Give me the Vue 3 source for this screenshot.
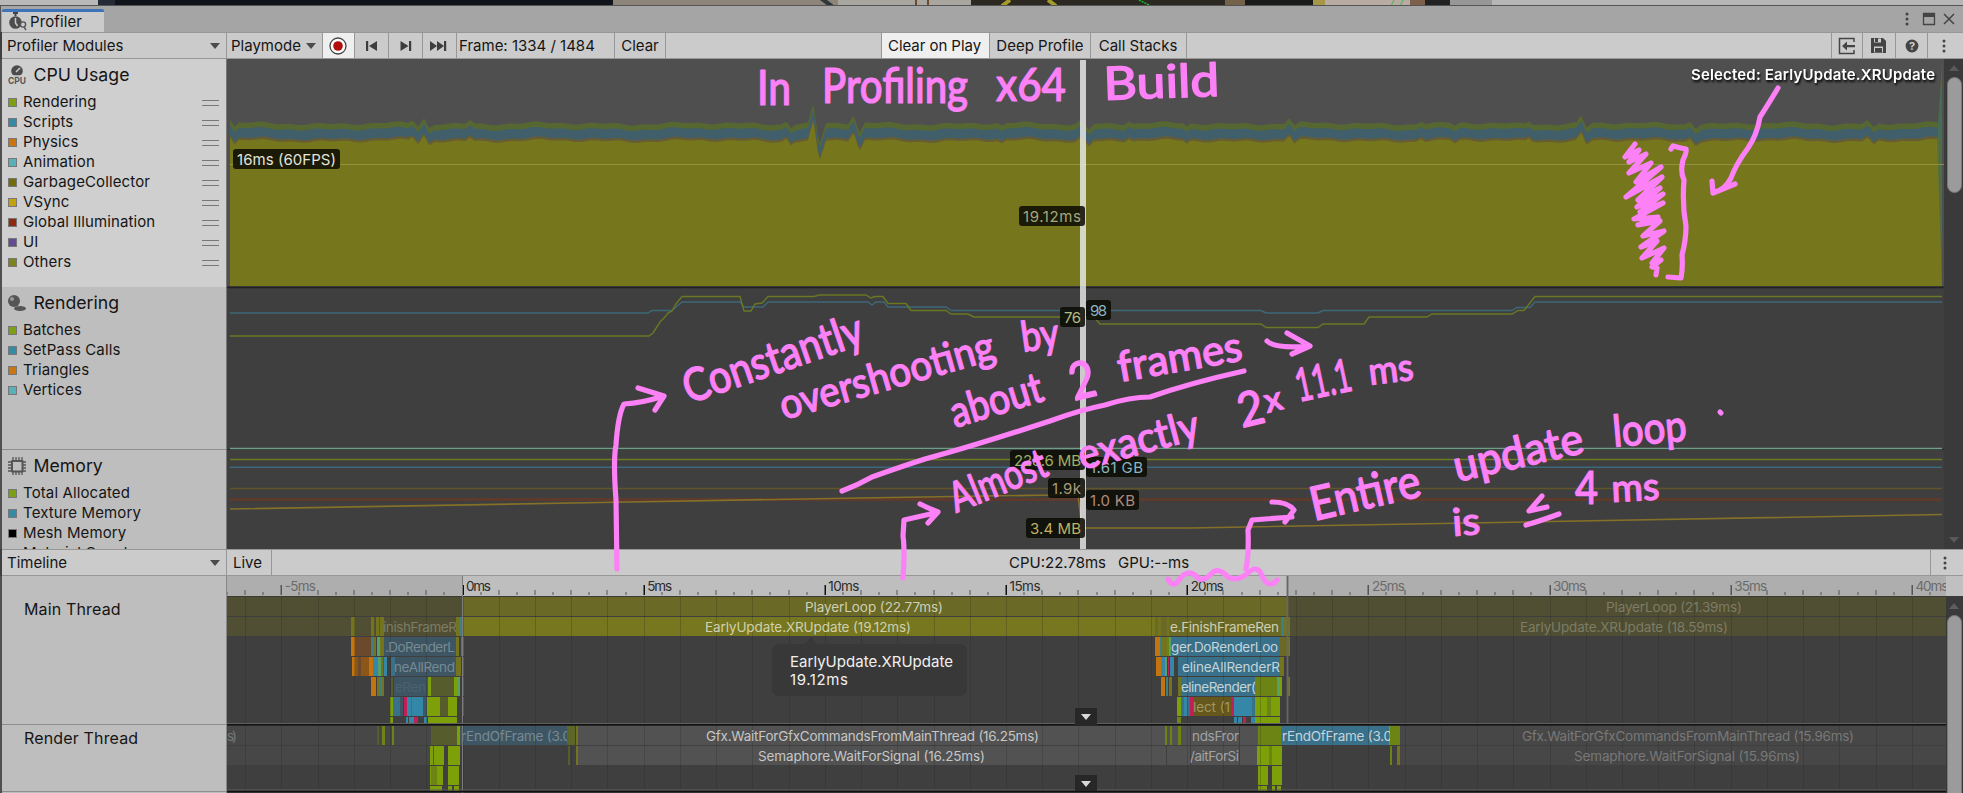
<script setup>
const modules = [
  { name: 'CPU Usage', key: 'cpu', handles: true, items: [
    ['Rendering', '#7f9f12'], ['Scripts', '#378aa5'], ['Physics', '#cb7412'], ['Animation', '#5bb0b8'],
    ['GarbageCollector', '#716c0e'], ['VSync', '#c3a10c'], ['Global Illumination', '#8c2a12'], ['UI', '#654c91'], ['Others', '#7c8220'] ] },
  { name: 'Rendering', key: 'rendering', items: [
    ['Batches', '#7f9f12'], ['SetPass Calls', '#378aa5'], ['Triangles', '#cb7412'], ['Vertices', '#5bb0b8'] ] },
  { name: 'Memory', key: 'memory', items: [
    ['Total Allocated', '#7f9f12'], ['Texture Memory', '#378aa5'], ['Mesh Memory', '#000'], ['Material Count', '#5bb0b8'] ] },
]

/* CPU area chart */
const spikes = [[230, -3, 4], [235, 4, 4], [412, -3, 4], [418, 3, 3], [424, -5, 4], [430, 4, 5], [470, -4, 5], [786, -3, 5], [791, 3, 4],
  [813, -18, 5], [820, 19, 6], [853, -8, 5], [860, 9, 5], [1002, 3, 5], [1080, -3, 5], [1089, 6, 5], [1129, -3, 4], [1187, 3, 4],
  [1289, -5, 5], [1295, 3, 5], [1421, -3, 5], [1455, 3, 5], [1529, -3, 4], [1581, -7, 5], [1587, 4, 5], [1690, -3, 5], [1696, 3, 5], [1867, -3, 5], [1874, 4, 5]]
const wobble = (x, k) => Math.sin(x * 0.09 + k) * 0.9 + Math.sin(x * 0.23 + k * 2) * 0.6 + Math.sin(x * 0.041 + 1) * 0.7
const shift = (x) => spikes.reduce((s, [c, a, w]) => s + a * Math.max(0, 1 - Math.abs(x - c) / w), 0)
const edge = (base, k) => {
  const pts = []
  for (let x = 230; x <= 1938; x += 1) pts.push(`${x},${(base + wobble(x, k) + shift(x)).toFixed(1)}`)
  return pts.join(' ')
}
const area = (base, k, end) => `230,286 ${edge(base, k)} ${end} 1942,286`
const greenArea = area(123.5, 0.5, '1942,60')
const blueArea = area(129, 0.5, '1942,70')
const brownArea = area(138.5, 0.2, '1942,139')
const oliveArea = area(141, 0.2, '1942,286')

const chartLines = [
  ['230,313 648,313 652,310.5 672,310.5 682,302 740,302 744,307 763,307 768,302 868,302 872,305 876,302 884,302 888,307 946,307 951,310.5 1261,310.5 1266,313 1318,313 1323,310.5 1512,310.5 1517,307.5 1530,307.5 1535,302 1942,302', '#3d6878', 1.4],
  ['230,336 649,336 653,333 660,322 664,318 668,313 672,311 676,304 682,296.5 740,296.5 744,311 751,311 755,304 762,303 768,296.5 814,296.5 819,295 866,295 871,298 875,296.5 883,296.5 888,303.5 906,303.5 911,310.5 946,310.5 951,314 968,314 974,317 1094,317 1100,324 1261,324 1266,327.5 1318,327.5 1323,324 1364,324 1369,317 1427,317 1432,314 1512,314 1518,310.5 1524,310.5 1535,296.5 1942,296.5', '#687823', 1.4],
  ['230,448.5 1942,448.5', '#719d88', 1.6], ['230,459.5 1942,459.5', '#6b7c22', 1.6], ['230,467.2 1942,467.2', '#3b687c', 1.6],
  ['230,488.5 1942,488.5', '#615429', 1.4], ['230,499.5 1942,499.5', '#5d3a2b', 3],
  ['230,509 600,502.5 860,498 1055,495 1078,495 1082,528 1190,528 1550,521.5 1942,514.5', '#857028', 1.6],
]
const tags = [
  ['16ms (60FPS)', 233, 149, 107, '#e4e4dc'], ['19.12ms', 1019, 206, 66, '#a6a67c'], ['76', 1060, 307, 25, '#b4bd80'], ['98', 1086, 300, 25, '#8cb5c2'],
  ['228.6 MB', 1010, 450, 75, '#9fae63'], ['1.61 GB', 1086, 457, 61, '#8cb5c2'], ['1.9k', 1048, 478, 37, '#a79b78'],
  ['1.0 KB', 1086, 490, 53, '#b08a7c'], ['3.4 MB', 1026, 518, 59, '#bdb262'],
]

/* Timeline */
const msX = (ms) => 462.5 + ms * 36.235
const ticks = []
for (let i = -13; i <= 81; i++) {
  const ms = i / 2
  const kind = i % 10 === 0 ? 10 : i % 2 === 0 ? 5 : 3
  ticks.push({ x: Math.round(msX(ms)), h: kind, dim: ms < 0 || ms > 22.77 })
}
const grid = ticks.filter((t) => t.h >= 5)
const labels = [[-5, 31], [0, 25], [5, 25], [10, 31], [15, 31], [20, 33], [25, 33], [30, 33], [35, 33], [40, 33]]
  .map(([m, w]) => ({ t: m + 'ms', x: msX(m) + 3.5, w, dim: m < 0 || m > 22 }))

const rows = [597, 617, 637, 657, 677, 697, 717, 726, 746, 766, 786]
const heights = [19, 19, 19, 19, 19, 19, 6, 19, 19, 19, 5]
const C = { o: '#c4740f', b: '#6a4a2a', t: '#3d7f86', y: '#74741f', g: '#7d9f08', d: '#565c2b', m: '#c02057', B: '#3587a8', D: '#3e5663', S: '#39718a',
  G: '#6c8414', p: '#6b6926', q: '#504f33', x: '#77771f', w: '#525252', v: '#474747', n: '#66581c', e: '#57a06a', r: '#8c5618' }
const bars = [
  [0, 227, 462, 'q'], [0, 462, 1287, 'p'], [0, 1288, 1946, 'q'],
  [1, 227, 462, 'q'], [1, 351, 355, 'y'], [1, 371, 374, 'y'], [1, 376, 384, 'y'], [1, 379, 380, 'd'], [1, 456, 459, 'y'], [1, 459, 462, 't'],
  [1, 462, 1155, 'x'], [1, 1155, 1281, 'p'], [1, 1158, 1161, 'y'], [1, 1167, 1169, 'y'], [1, 1281, 1284, 't'], [1, 1284, 1290, 'y'], [1, 1290, 1946, 'q'],
  [2, 351, 355, 'o'], [2, 355, 371, 'b'], [2, 371, 374, 't'], [2, 374, 376, 'y'], [2, 377, 380, 'e'], [2, 380, 384, 'y'], [2, 384, 456, 'D'], [2, 456, 459, 'y'], [2, 461, 464, 'y'],
  [2, 1155, 1160, 'o'], [2, 1160, 1162, 't'], [2, 1162, 1167, 'y'], [2, 1167, 1169, 'G'], [2, 1169, 1171, 'e'], [2, 1171, 1280, 'S'], [2, 1280, 1287, 'p'], [2, 1287, 1290, 'y'],
  [3, 352, 355, 'o'], [3, 355, 370, 'r'], [3, 358, 361, 'b'], [3, 369, 373, 'o'], [3, 373, 378, 'B'], [3, 378, 381, 'e'], [3, 381, 383, 'y'], [3, 383, 384, 'm'], [3, 384, 387, 'B'], [3, 391, 395, 'S'], [3, 395, 456, 'D'], [3, 456, 461, 'y'], [3, 462, 464, 'y'],
  [3, 1156, 1161, 'o'], [3, 1161, 1165, 'B'], [3, 1165, 1167, 'e'], [3, 1168, 1169, 'm'], [3, 1170, 1174, 'B'], [3, 1178, 1280, 'S'], [3, 1280, 1284, 'y'],
  [4, 371, 376, 'o'], [4, 377, 379, 'y'], [4, 379, 382, 't'], [4, 382, 384, 'y'], [4, 391, 393, 'd'], [4, 394, 428, 'D'], [4, 428, 431, 'g'], [4, 431, 454, 'd'], [4, 454, 457, 'g'], [4, 457, 460, 'e'], [4, 462, 464, 'y'],
  [4, 1161, 1165, 'o'], [4, 1166, 1168, 't'], [4, 1169, 1172, 'y'], [4, 1178, 1181, 'y'], [4, 1181, 1255, 'S'], [4, 1255, 1277, 'G'], [4, 1277, 1279, 'e'], [4, 1279, 1282, 'g'], [4, 1288, 1290, 'y'],
  [5, 390, 393, 'g'], [5, 393, 400, 'S'], [5, 400, 403, 'D'], [5, 404, 407, 'm'], [5, 407, 423, 'B'], [5, 411, 412, 'S'], [5, 423, 427, 'D'], [5, 427, 440, 'g'], [5, 440, 448, 'd'], [5, 448, 457, 'g'], [5, 462, 464, 'y'],
  [5, 1177, 1181, 'g'], [5, 1181, 1190, 'S'], [5, 1184, 1187, 'B'], [5, 1190, 1193, 'm'], [5, 1193, 1232, 'n'], [5, 1232, 1234, 'm'], [5, 1234, 1252, 'B'], [5, 1252, 1255, 'S'], [5, 1255, 1280, 'g'], [5, 1267, 1271, 'G'],
  [6, 390, 393, 'g'], [6, 406, 408, 'B'], [6, 409, 414, 'B'], [6, 414, 418, 'm'], [6, 424, 427, 'B'], [6, 428, 457, 'g'],
  [6, 1177, 1181, 'G'], [6, 1234, 1237, 'B'], [6, 1238, 1242, 'B'], [6, 1243, 1246, 'm'], [6, 1251, 1255, 'B'], [6, 1255, 1280, 'g'],
  [7, 227, 431, 'v'], [7, 377, 379, 'd'], [7, 382, 385, 'G'], [7, 392, 394, 'G'], [7, 431, 457, 'd'], [7, 457, 460, 'g'], [7, 460, 567, 'D'], [7, 567, 575, 'd'], [7, 571, 572, 'y'], [7, 576, 578, 'y'], [7, 578, 1190, 'w'],
  [7, 1191, 1239, 'w'], [7, 1240, 1258, 'w'], [7, 1165, 1167, 'G'], [7, 1170, 1172, 'G'], [7, 1178, 1181, 'G'], [7, 1258, 1281, 'G'], [7, 1281, 1389, 'S'], [7, 1389, 1391, 'e'], [7, 1390, 1400, 'G'], [7, 1400, 1946, 'v'],
  [8, 227, 430, 'v'], [8, 430, 444, 'g'], [8, 433, 434, 'd'], [8, 448, 460, 'g'], [8, 568, 570, 'd'], [8, 576, 578, 'y'], [8, 578, 1166, 'w'], [8, 1167, 1190, 'w'], [8, 1191, 1239, 'w'], [8, 1240, 1257, 'w'],
  [8, 1257, 1282, 'g'], [8, 1269, 1272, 'G'], [8, 1390, 1392, 'G'], [8, 1397, 1400, 'y'], [8, 1400, 1946, 'v'],
  [9, 430, 443, 'g'], [9, 431, 437, 'G'], [9, 448, 459, 'g'], [9, 1258, 1268, 'g'], [9, 1272, 1282, 'g'],
  [10, 430, 442, 'g'], [10, 448, 452, 'g'], [10, 454, 459, 'g'], [10, 1258, 1267, 'g'], [10, 1272, 1275, 'g'], [10, 1277, 1281, 'g'],
]
const barTexts = [
  [0, 'PlayerLoop (22.77ms)', 805, 138, '#cfcfb4'], [0, 'PlayerLoop (21.39ms)', 1606, 136, '#7d7c64'],
  [1, 'EarlyUpdate.XRUpdate (19.12ms)', 705, 206, '#d0d0b0'], [1, 'EarlyUpdate.XRUpdate (18.59ms)', 1520, 208, '#7d7c64'],
  [1, 'inishFrameR', 383, 74, '#7d7c64'], [1, 'e.FinishFrameRen', 1170, 109, '#cfcfb4'],
  [2, '.DoRenderL', 385, 70, '#768a94'], [2, 'ger.DoRenderLoo', 1171, 107, '#c4d4da'],
  [3, 'neAllRend', 394, 61, '#768a94'], [3, 'elineAllRenderR', 1182, 98, '#c4d4da'],
  [4, 'eRen', 395, 31, '#4b616d'], [4, 'elineRender(', 1181, 75, '#c4d4da'],
  [5, 'lect (1', 1193, 37, '#a29660'],
  [7, 's)', 227, 10, '#777'], [7, 'rEndOfFrame (3.0', 461, 110, '#768a94'], [7, 'Gfx.WaitForGfxCommandsFromMainThread (16.25ms)', 706, 333, '#c6c6c6'],
  [7, 'ndsFror', 1192, 47, '#a2a2a2'], [7, 'rEndOfFrame (3.0', 1282, 110, '#c4d4da'], [7, 'Gfx.WaitForGfxCommandsFromMainThread (15.96ms)', 1522, 332, '#787878'],
  [8, 'Semaphore.WaitForSignal (16.25ms)', 758, 227, '#c6c6c6'], [8, '/aitForSi', 1190, 49, '#a2a2a2'], [8, 'Semaphore.WaitForSignal (15.96ms)', 1574, 226, '#787878'],
]

/* Pen annotations: text, x, baseline y, width, size, angle */
const notes = [
  ['In', 757, 105, 34, 48, 0], ['Profiling', 822, 103, 146, 48, 0], ['x64', 996, 101, 70, 46, 0], ['Build', 1104, 100, 116, 46, -2],
  ['Constantly', 689, 404, 188, 46, -19], ['overshooting', 784, 420, 222, 42, -16], ['by', 1023, 352, 38, 42, -8],
  ['about', 955, 428, 95, 43, -17], ['2', 1074, 401, 26, 52, -14], ['frames', 1120, 382, 126, 42, -10],
  ['Almost', 956, 513, 102, 42, -22], ['exactly', 1082, 470, 124, 42, -15], ['2', 1242, 428, 26, 48, -14], ['x', 1267, 413, 18, 34, -14],
  ['11.1', 1299, 402, 56, 46, -12], ['ms', 1370, 385, 45, 38, -7],
  ['Entire', 1314, 521, 112, 47, -13], ['update', 1457, 482, 132, 44, -13], ['loop', 1614, 447, 74, 44, -5],
  ['is', 1453, 536, 28, 38, -4], ['4', 1575, 504, 23, 46, 0], ['ms', 1612, 502, 48, 38, -3],
]
const strokes = [
  'M617 569L616 500Q613 460 616 445Q618 415 624 404Q642 403 664 396L638 388M664 396L655 410',
  'M842 491Q858 485 872 477Q900 467 925 459Q970 447 1050 421Q1080 410 1105 405Q1130 397 1150 397Q1190 383 1244 371',
  'M1267 341Q1275 349 1310 346M1287 333L1310 346L1292 354',
  'M903 578Q905 550 903 536L904 520L935 513M920 504Q928 508 938 512L928 523',
  'M1246 569Q1249 555 1248 530L1252 520L1292 517M1272 502Q1288 502 1294 510L1285 522',
  'M1168 579Q1173 589 1179 580Q1188 567 1198 578Q1203 582 1211 574Q1218 566 1228 577Q1237 582 1248 573Q1258 563 1263 578Q1270 589 1277 580',
  'M1671 149L1673 146Q1680 148 1686 149Q1687 152 1683 160Q1680 172 1684 180Q1682 205 1686 226Q1686 240 1682 255Q1683 268 1681 278L1668 277',
  'M1778 88Q1767 106 1760 117Q1757 135 1748 148Q1736 164 1731 178Q1725 190 1713 193L1712 181M1713 193L1735 184',
  'M1635 144L1625 157L1639 150L1629 162L1646 154L1629 173L1651 163L1636 182L1661 167L1626 197L1662 177L1638 200L1660 188L1637 207L1663 194L1640 212L1663 203L1634 219L1658 217L1638 225L1660 221L1643 236L1664 231L1641 247L1657 241L1642 258L1664 248L1652 263L1661 260L1652 267L1657 268L1656 275',
  'M1542 496L1529 511L1547 507M1526 525Q1540 521 1559 514',
  'M1720 412L1721 413',
]
</script>

<template>
  <div class="screen">
    <svg class="backdrop" width="1963" height="6" viewBox="0 0 1963 6">
      <rect width="98" height="6" fill="#b9b9b9" /><rect x="98" width="17" height="6" fill="#252b36" /><rect x="115" width="498" height="6" fill="#10151c" />
      <rect x="613" width="225" height="6" fill="#8d857a" /><path d="M820 0h7l8 6h-7z" fill="#30373a" /><rect x="838" width="133" height="6" fill="#a9a59f" />
      <path d="M916 0v6M928 0v6" stroke="#6e4a2c" stroke-width="2" /><rect x="971" width="254" height="6" fill="#2c2923" />
      <path d="M1010 0l-8 6M1048 0l8 6" stroke="#a59b29" stroke-width="4" /><path d="M1139 0l12 6" stroke="#1dbd31" stroke-width="1.5" stroke-dasharray="2 1" />
      <rect x="1225" width="20" height="6" fill="#74624b" /><rect x="1245" width="68" height="6" fill="#1a1b1b" /><rect x="1313" width="12" height="6" fill="#a59648" />
      <rect x="1325" width="85" height="6" fill="#b8aba2" /><path d="M1394 0l-3 6M1403 0l-3 6" stroke="#3bb84a" /><rect x="1410" width="15" height="6" fill="#7d604c" /><rect x="1425" width="25" height="6" fill="#222" />
      <rect x="1450" width="42" height="6" fill="#979797" /><rect x="1492" width="471" height="6" fill="#b6b6b6" /><path d="M0 5.5H1963" stroke="#555" />
    </svg>

    <header class="tabbar">
      <div class="tab">
        <svg width="20" height="20" viewBox="0 0 20 20">
          <path d="M5 1h5M7.5 1v3" stroke="#454545" stroke-width="2" /><circle cx="7.5" cy="10.5" r="6.3" fill="#4d4d4d" /><path d="M7.5 6v5l2 3" stroke="#ccc" stroke-width="1.5" fill="none" />
          <circle cx="15" cy="12.5" r="2.6" fill="#ccc" stroke="#555" stroke-width="1.4" /><path d="M16 15l2 3" stroke="#555" stroke-width="1.4" />
        </svg>
        <span>Profiler</span>
      </div>
      <svg class="winbtns" width="56" height="16" viewBox="0 0 56 16">
        <g fill="#444"><circle cx="5" cy="3" r="1.5" /><circle cx="5" cy="8" r="1.5" /><circle cx="5" cy="13" r="1.5" /></g>
        <path d="M21.5 2.5h11v11h-11z" fill="none" stroke="#444" stroke-width="1.3" /><path d="M21 2h12v4H21z" fill="#444" /><path d="M42 3l10 10M52 3L42 13" stroke="#444" stroke-width="1.5" />
      </svg>
    </header>

    <div class="toolbar">
      <div class="cell c-mod"><span>Profiler Modules</span><i class="caret" /></div>
      <div class="cell c-play"><span>Playmode</span><i class="caret" /></div>
      <div class="cell c-rec on"><svg width="20" height="20" viewBox="0 0 20 20"><circle cx="10" cy="10" r="8" fill="#fff" stroke="#444" stroke-width="1.3" /><circle cx="10" cy="10" r="4.8" fill="#b40d0d" /></svg></div>
      <div class="cell c-ico"><svg width="14" height="12" viewBox="0 0 14 12"><path d="M1 1h2.2v10H1zM12 1v10L4 6z" fill="#3d3d3d" /></svg></div>
      <div class="cell c-ico"><svg width="14" height="12" viewBox="0 0 14 12"><path d="M10 1h2.2v10H10zM1.5 1v10l8-5z" fill="#3d3d3d" /></svg></div>
      <div class="cell c-ico last"><svg width="18" height="12" viewBox="0 0 18 12"><path d="M15 1h2.2v10H15zM1 1v10l7-5zM8 1v10l7-5z" fill="#3d3d3d" /></svg></div>
      <div class="cell c-frame">Frame: 1334 / 1484</div>
      <div class="cell c-clear">Clear</div>
      <div class="cell c-gap" />
      <div class="cell c-cop on">Clear on Play</div>
      <div class="cell c-deep">Deep Profile</div>
      <div class="cell c-call">Call Stacks</div>
      <div class="cell c-fill" />
      <div class="cell c-r1"><svg width="18" height="18" viewBox="0 0 18 18"><path d="M16 5V1.5H1.5v15H16V13" fill="none" stroke="#444" stroke-width="1.5" /><path d="M4 9l5-4.5V8h8v2.2H9v3.3z" fill="#444" /></svg></div>
      <div class="cell c-r2"><svg width="17" height="17" viewBox="0 0 17 17"><path d="M1 1h12l3 3v12H1z" fill="#444" /><path d="M4 1.5h7v4H4zM4 9.5h9v6H4z" fill="#ccc" /><path d="M5 1h3v4H5zM5 11h7v4.500H5z" fill="#444" /></svg></div>
      <div class="cell c-r3"><svg width="14" height="14" viewBox="0 0 14 14"><circle cx="7" cy="7" r="6.4" fill="#444" /><text x="7" y="11" text-anchor="middle" class="q">?</text></svg></div>
      <div class="cell c-r4"><svg width="6" height="14" viewBox="0 0 6 14"><g fill="#444"><circle cx="3" cy="2" r="1.500" /><circle cx="3" cy="7" r="1.500" /><circle cx="3" cy="12" r="1.500" /></g></svg></div>
    </div>

    <main class="charts">
      <aside class="modules">
        <section v-for="m in modules" :key="m.key" class="module" :class="m.key">
          <h2>
            <svg v-if="m.key === 'cpu'" width="20" height="20" viewBox="0 0 20 20"><circle cx="10" cy="6" r="5.800" fill="#4b4b4b" /><path d="M9 7l4-4M6 11h8" stroke="#ccc" stroke-width="1.500" /><text x="10" y="19" text-anchor="middle" textLength="18" lengthAdjust="spacingAndGlyphs" class="cpu-txt">CPU</text></svg>
            <svg v-else-if="m.key === 'rendering'" width="20" height="20" viewBox="0 0 20 20"><ellipse cx="13" cy="15.500" rx="6" ry="2.500" fill="#555" /><circle cx="7" cy="8" r="6" fill="#555" /><circle cx="5" cy="6" r="2" fill="#999" /></svg>
            <svg v-else width="20" height="20" viewBox="0 0 20 20"><path d="M6 1v18M9 1v18M12 1v18M15 1v18M1 6h18M1 9h18M1 12h18M1 15h18" stroke="#555" stroke-width="1.300" /><rect x="4" y="4" width="12.500" height="12.500" rx="1" fill="#555" /><rect x="6" y="6" width="8.500" height="8.500" fill="#bebebe" /></svg>
            <span>{{ m.name }}</span>
          </h2>
          <ul>
            <li v-for="it in m.items" :key="it[0]"><b :style="{ background: it[1] }" /><span>{{ it[0] }}</span><i v-if="m.handles" class="grip" /></li>
          </ul>
        </section>
      </aside>
      <svg class="plot" width="1736" height="490" viewBox="227 59 1736 490">
        <rect x="227" y="59" width="1736" height="490" fill="#3f3f3f" />
        <rect x="227" y="59" width="1719" height="227" fill="#4f4f4f" />
        <polygon :points="greenArea" fill="#576732" /><polygon :points="blueArea" fill="#405f6b" /><polygon :points="brownArea" fill="#665d35" /><polygon :points="oliveArea" fill="#76761d" />
        <path d="M1937 142L1942 70V286z" fill="#47724f" opacity=".7" />
        <path d="M230 164.500H1944" stroke="#91913f" /><path d="M227 287.500H1946" stroke="#232323" stroke-width="1.500" /><path d="M227 449.500H1946" stroke="#2b2b2b" />
        <polyline v-for="(l, i) in chartLines" :key="i" :points="l[0]" fill="none" :stroke="l[1]" :stroke-width="l[2]" />
        <rect x="1080" y="60" width="6" height="489" fill="#efefef" opacity=".8" />
        <g v-for="t in tags" :key="t[0]">
          <rect :x="t[1]" :y="t[2]" :width="t[3]" height="20" rx="3" fill="#0a0a04" opacity=".86" />
          <text :x="t[1] + 4" :y="t[2] + 15.500" :textLength="t[3] - 8" :fill="t[4]">{{ t[0] }}</text>
        </g>
        <text class="selected" x="1691" y="80" textLength="244" fill="#fff">Selected: EarlyUpdate.XRUpdate</text>
        <rect x="1944" y="59" width="19" height="490" fill="#3a3a3a" /><path d="M1954 65l5 6h-10zM1954 543l5-6h-10z" fill="#595959" />
        <rect x="1947.500" y="77.500" width="14" height="115" rx="7" fill="#9b9b9b" stroke="#777" />
      </svg>
    </main>

    <div class="toolbar lower">
      <div class="cell c-mod"><span>Timeline</span><i class="caret" /></div>
      <div class="cell c-live">Live</div>
      <div class="cell c-stats"><span>CPU:22.78ms</span><span>GPU:--ms</span></div>
      <div class="cell c-more"><svg width="6" height="14" viewBox="0 0 6 14"><g fill="#444"><circle cx="3" cy="2" r="1.500" /><circle cx="3" cy="7" r="1.500" /><circle cx="3" cy="12" r="1.500" /></g></svg></div>
    </div>

    <div class="timeline">
      <aside class="threads"><div class="thread main">Main Thread</div><div class="thread render">Render Thread</div></aside>
      <svg class="plot" width="1736" height="217" viewBox="227 576 1736 217">
        <defs><clipPath id="track"><rect x="227" y="576" width="1719" height="217" /></clipPath></defs>
        <rect x="227" y="576" width="1736" height="217" fill="#3f3f3f" />
        <rect x="227" y="576" width="235" height="20" fill="#aeaeae" /><rect x="462" y="576" width="825" height="20" fill="#bebebe" /><rect x="1287" y="576" width="659" height="20" fill="#aeaeae" /><rect x="1946" y="576" width="17" height="20" fill="#c0c0c0" />
        <g clip-path="url(#track)">
          <rect v-for="(t, i) in ticks" :key="'t' + i" :x="t.x - 0.5" :y="595 - t.h" :width="t.h === 10 ? 1.500 : 1" :height="t.h" :fill="t.h === 10 && !t.dim ? '#111' : '#555'" />
          <text v-for="l in labels" :key="l.t" class="rule" :x="l.x" y="591" :textLength="l.w" :fill="l.dim ? '#6b6b6b' : '#2b2b2b'">{{ l.t }}</text>
          <rect v-for="(b, i) in bars" :key="'b' + i" :x="b[1]" :y="rows[b[0]]" :width="b[2] - b[1]" :height="heights[b[0]]" :fill="C[b[3]]" />
          <rect v-for="(t, i) in grid" :key="'g' + i" :x="t.x" y="597" width="1" height="195" fill="#222" opacity=".22" />
          <text v-for="(t, i) in barTexts" :key="'x' + i" class="bar" :x="t[2]" :y="rows[t[0]] + 14.500" :textLength="t[3]" :fill="t[4]">{{ t[1] }}</text>
          <rect x="567" y="726" width="8" height="19" fill="#5b6628" /><rect x="1390" y="726" width="10" height="19" fill="#6c8414" />
        </g>
        <path d="M227 596.500H1946" stroke="#3a3a33" /><path d="M462.500 576V793" stroke="#7b7b7b" /><path d="M1287.500 576V723" stroke="#666" stroke-width="1.800" />
        <path d="M227 723.500H1946M227 790H1946" stroke="#606060" /><path d="M227 724.800H1946M227 791.500H1946" stroke="#111" stroke-width="1.400" />
        <path d="M804 645l7-8 7 8z" fill="#383838" /><rect x="772" y="644" width="195" height="52" rx="7" fill="#383838" />
        <text x="790" y="667" textLength="163" fill="#f0f0f0">EarlyUpdate.XRUpdate</text><text x="790" y="685" textLength="58" fill="#f0f0f0">19.12ms</text>
        <path d="M1075 708h22v18h-22zM1075 775h22v16h-22z" fill="#272727" /><path d="M1081 714h10l-5 6zM1081 781h10l-5 6z" fill="#d8d8d8" />
        <rect x="1946" y="596" width="17" height="197" fill="#3a3a3a" /><path d="M1954 603l5 6h-10z" fill="#5e5e5e" /><rect x="1947.500" y="615.500" width="14" height="190" rx="7" fill="#9b9b9b" stroke="#777" />
      </svg>
    </div>

    <svg class="ink" width="1963" height="793" viewBox="0 0 1963 793">
      <path v-for="(s, i) in strokes" :key="i" :d="s" />
      <text v-for="(n, i) in notes" :key="'n' + i" :x="n[1]" :y="n[2]" :font-size="n[4]" :textLength="n[3]" lengthAdjust="spacingAndGlyphs" :transform="`rotate(${n[5]} ${n[1]} ${n[2]})`">{{ n[0] }}</text>
    </svg>
  </div>
</template>

<style>
html, body { background: #3f3f3f; overflow: hidden; }
</style>

<style scoped>
.screen { position: relative; width: 1963px; height: 793px; overflow: hidden; display: flex; flex-direction: column; font: 15px/20px Inter, sans-serif; color: #151515; }
.screen, .screen * { box-sizing: border-box; }
.backdrop, .plot { display: block; flex: none; }
.plot { font-size: 15px; }
.tabbar { height: 26px; flex: none; background: #a5a5a5; display: flex; justify-content: space-between; padding-left: 1px; border-left: 1px solid #555; }
.tab { width: 102px; height: 23px; margin-top: 3px; background: #cbcbcb; border-top: 3px solid #3f73b9; border-radius: 2px 2px 0 0; display: flex; align-items: center; padding-left: 6px; gap: 2px; letter-spacing: .1px; }
.winbtns { margin: 5px 5px 0 0; }
.toolbar { height: 27px; flex: none; display: flex; background: #cbcbcb; border-top: 1px solid #979797; border-bottom: 1px solid #979797; margin-left: 2px; }
.cell { height: 25px; flex: none; border-right: 1px solid #979797; display: flex; align-items: center; justify-content: center; white-space: nowrap; }
.on { background: #efefef; }
.caret { border: 5px solid transparent; border-top: 6px solid #4b4b4b; border-bottom: 0; }
.c-mod { width: 225px; justify-content: space-between; padding: 0 6px 0 5px; }
.c-play { width: 96px; justify-content: space-between; padding: 0 6px 0 4px; }
.c-rec { width: 32px; padding-right: 1px; }
.c-ico { width: 34px; }
.last { padding-right: 4px; }
.c-frame { width: 158px; justify-content: flex-start; padding-left: 2px; }
.c-clear { width: 51px; }
.c-gap { width: 216px; }
.c-cop { width: 108px; padding-right: 2px; letter-spacing: -.05px; }
.c-cop.cell { width: 118px; flex: 0 0 108px; }
.c-deep { flex-basis: 101px; }
.c-call { flex-basis: 96px; padding-right: 1px; }
.c-fill { flex: 1; }
.c-r1 { width: 31px; }
.c-r2 { width: 33px; padding-right: 2px; }
.c-r3 { width: 32px; }
.c-r4 { width: 35px; border-right: 0; padding-right: 3px; }
.q { font: 700 11px Inter, sans-serif; fill: #ccc; }
.charts { height: 490px; flex: none; display: flex; border-top: 1px solid #d8d8d8; }
.charts > * { margin-top: -1px; }
.modules { width: 227px; height: 490px; overflow: hidden; flex: none; background: #bebebe; border-left: 2px solid #505050; border-right: 1px solid #777; }
.module.cpu { height: 228px; background: #cfcfcf; }
.module.rendering { height: 162px; }
.module.memory { height: 120px; border-top: 1px solid #8e8e8e; }
h2 { margin: 0; height: 33px; padding: 0 0 1px 5px; font-size: 17.700px; line-height: 22px; font-weight: 400; display: flex; align-items: center; gap: 6.500px; }
ul { margin: 0; padding: 0; list-style: none; }
li { height: 20px; display: flex; align-items: center; padding-left: 6px; letter-spacing: .12px; }
li b { width: 9px; height: 9px; border: 1px solid #777; margin: 1px 6px 0 0; }
li span { flex: 1; }
.grip { width: 17px; height: 6px; margin: 1px 7px 0 0; border-top: 1px solid #777; border-bottom: 1px solid #777; }
.cpu-txt { font: 700 9px Inter, sans-serif; fill: #555; }
.selected { font-weight: 600; filter: drop-shadow(1px 2px 1px #000); }
.c-live { width: 45px; padding-right: 3px; }
.c-stats { flex: 1; justify-content: flex-start; gap: 12px; padding-left: 737px; }
.c-more { width: 32px; border-right: 0; padding-right: 4px; }
.timeline { display: flex; height: 217px; flex: none; }
.threads { width: 227px; flex: none; background: #bebebe; border-left: 2px solid #505050; border-right: 1px solid #888; font-size: 16px; letter-spacing: .15px; }
.thread { padding-left: 22px; }
.main { height: 149px; padding-top: 23px; border-bottom: 1px solid #8e8e8e; }
.render { height: 67px; padding-top: 3px; border-bottom: 1px solid #8e8e8e; }
.rule, .bar { font-size: 13.500px; }
.ink { position: absolute; left: 0; top: 0; pointer-events: none; }
.ink path { fill: none; stroke: #fc80f6; stroke-width: 5.200; stroke-linecap: round; stroke-linejoin: round; }
.ink text { font-family: Lato, sans-serif; font-weight: 500; fill: #fc80f6; stroke: #fc80f6; stroke-width: 1.200; stroke-linejoin: round; }
</style>
